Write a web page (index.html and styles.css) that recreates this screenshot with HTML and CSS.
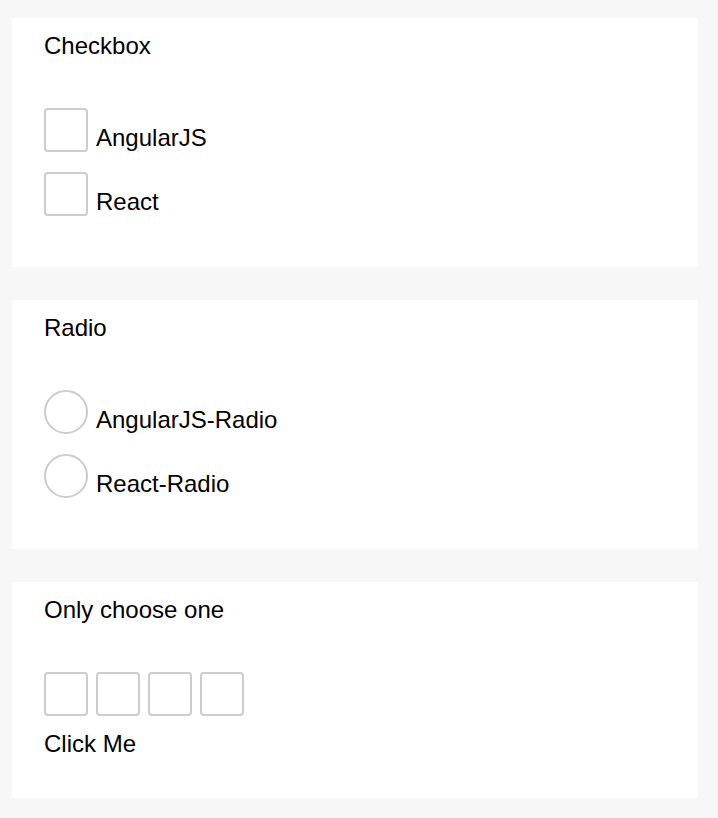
FILE: index.html
```html
<!DOCTYPE html>
<html lang="en">
<head>
<meta charset="utf-8">
<title>Checkbox</title>
<link rel="stylesheet" href="styles.css">
</head>
<body>
<main class="page">
  <section class="card">
    <h2 class="card-title">Checkbox</h2>
    <div class="options">
      <label class="option"><input type="checkbox" class="box"><span class="option-text">AngularJS</span></label>
      <label class="option"><input type="checkbox" class="box"><span class="option-text">React</span></label>
    </div>
  </section>
  <section class="card">
    <h2 class="card-title">Radio</h2>
    <div class="options">
      <label class="option"><input type="radio" name="fw" class="box round"><span class="option-text">AngularJS-Radio</span></label>
      <label class="option"><input type="radio" name="fw" class="box round"><span class="option-text">React-Radio</span></label>
    </div>
  </section>
  <section class="card card-last">
    <h2 class="card-title">Only choose one</h2>
    <div class="options">
      <div class="box-row">
        <input type="checkbox" class="box">
        <input type="checkbox" class="box">
        <input type="checkbox" class="box">
        <input type="checkbox" class="box">
      </div>
    </div>
    <div class="click-text">Click Me</div>
  </section>
</main>
</body>
</html>
```
FILE: styles.css
```css
html, body {
  margin: 0;
  padding: 0;
  background: #f7f7f7;
}
body {
  font-family: "Liberation Sans", Arial, Helvetica, sans-serif;
  font-size: 24px;
  color: #000;
}
.page {
  display: flex;
  flex-direction: column;
  gap: 33px;
  padding: 18px 20px 20px 12px;
}
.card {
  background: #fff;
  border-radius: 2px;
  padding: 14px 32px 51px;
}
.card-last {
  padding-bottom: 40px;
}
.card-title {
  margin: 0;
  font-size: 24px;
  font-weight: normal;
  line-height: 28px;
}
.options {
  margin-top: 48px;
  display: flex;
  flex-direction: column;
  gap: 20px;
}
.option {
  display: flex;
  align-items: flex-end;
  gap: 8px;
  line-height: 28px;
}
.option-text {
  display: block;
  margin-bottom: 0;
}
.box {
  appearance: none;
  -webkit-appearance: none;
  margin: 0;
  width: 44px;
  height: 44px;
  box-sizing: border-box;
  border: 2px solid #cccccc;
  border-radius: 4px;
  background: #fff;
  flex: none;
}
.round {
  border-radius: 50%;
}
.box-row {
  display: flex;
  gap: 8px;
}
.click-text {
  margin-top: 14px;
  line-height: 28px;
}
```
